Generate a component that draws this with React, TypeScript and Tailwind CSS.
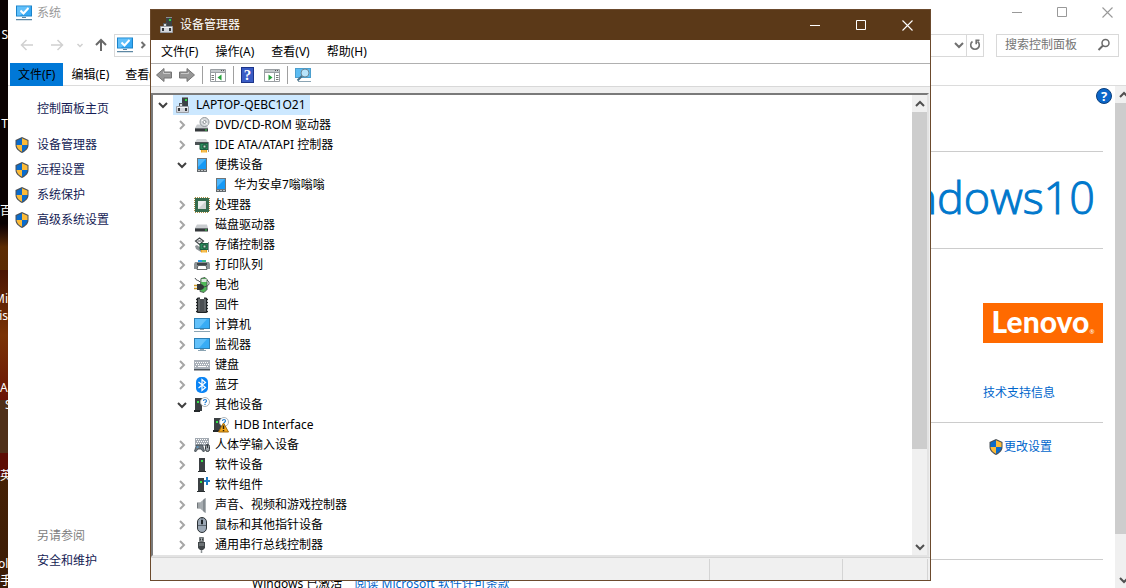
import React from "react";

type SvgProps = { className?: string; children: React.ReactNode; box?: string };

function Pic({ className = "h-4 w-4", children, box = "0 0 16 16" }: SvgProps) {
  return (
    <svg viewBox={box} className={`shrink-0 ${className}`} fill="none" aria-hidden="true">
      {children}
    </svg>
  );
}

function SystemIcon() {
  return (
    <Pic className="h-4 w-4">
      <path d="M0 0.5h16v11H0z" fill="#1b83c9" />
      <path d="M1 1.5h14v9H1z" fill="#36a9f4" />
      <path d="M1 1.5h14L4 10.500H1z" fill="#62c0fa" />
      <path d="M4.500 5.500l3 3 5-5.500" stroke="#fff" strokeWidth="2" />
      <path d="M6 12h4v1H6zM0 14h16v1.300H0z" fill="#5d87a3" />
    </Pic>
  );
}

function ManagerIcon() {
  return (
    <Pic>
      <path d="M7 0h6v10H7z" fill="#3c4245" />
      <path d="M7 0h6v1H7z" fill="#8b9092" />
      <path d="M10 2h2v2h-2z" fill="#31d843" />
      <path d="M4 6h4v3H4z" fill="#555a5e" />
      <path d="M5 7h2v2H5z" fill="#d6d9dc" />
      <path d="M1.500 9.500h12v6h-12z" fill="#d3d6dc" stroke="#9a9fa6" />
      <path d="M3 11h2v3H3zM10 11h2v3h-2z" fill="#33373b" />
      <path d="M2 10.500h11" stroke="#f1f2f4" />
    </Pic>
  );
}

function DriveBase() {
  return (
    <>
      <path d="M3 7.500h10L14 11H1z" fill="#c9cccf" />
      <path d="M1 11h13v3.500H1z" fill="#34383b" />
      <path d="M1 11h13v1H1z" fill="#6b7073" />
      <path d="M11 12.500h2v1h-2z" fill="#3fe052" />
    </>
  );
}

function DvdIcon() {
  return (
    <Pic>
      <DriveBase />
      <circle cx="10.500" cy="5" r="4.500" fill="#d8dbdd" stroke="#90979b" />
      <circle cx="10.500" cy="5" r="1.500" fill="#fff" stroke="#858b8f" />
      <path d="M7.500 3l2 1M11.500 6l2 1.500" stroke="#fff" />
    </Pic>
  );
}

function CardBadge() {
  return (
    <>
      <path d="M6 6.500h8v6H6z" fill="#2c8c5e" stroke="#1d5c40" />
      <path d="M9 8h3v3H9z" fill="#c8d8cf" stroke="#174d34" />
      <path d="M7 13h6v2.500H7z" fill="#f0a61c" />
      <path d="M9 13v3M11 13v3" stroke="#fff3cf" strokeWidth=".6" />
      <path d="M14.500 5v10" stroke="#8a9399" />
    </>
  );
}

function IdeIcon() {
  return (
    <Pic>
      <path d="M3 2h9l2 3H1z" fill="#d0d3d5" />
      <path d="M1 5h13v3H1z" fill="#4c5255" />
      <CardBadge />
    </Pic>
  );
}

function PortableIcon() {
  return (
    <Pic>
      <path d="M3 1h10v14H3z" fill="#6f7578" />
      <path d="M4 2h8v10H4z" fill="#1599f6" />
      <path d="M4 2h8L4 10z" fill="#4db6fb" />
      <path d="M3 13h10v1.500H3z" fill="#5b6164" />
      <path d="M4 13.500h2M7 13.500h2M10 13.500h2" stroke="#d9dcde" strokeWidth=".8" />
    </Pic>
  );
}

function CpuIcon() {
  return (
    <Pic>
      <path d="M1 .5h14M1 15.500h14M.5 1v14M15.500 1v14" stroke="#a98b45" strokeDasharray="1 1" />
      <path d="M1 1h14v14H1z" fill="#356b4d" />
      <path d="M4 4h8v8H4z" fill="#d0d4d2" />
      <path d="M4 4h8L4 12z" fill="#eceeed" />
    </Pic>
  );
}

function DiskIcon() {
  return (
    <Pic>
      <DriveBase />
    </Pic>
  );
}

function StorageIcon() {
  return (
    <Pic>
      <path d="M5.500 1L9.500 4 5.500 7.500 1.500 4z" fill="#fff" stroke="#44494c" strokeWidth="1.200" />
      <path d="M3.500 4h4" stroke="#44494c" />
      <path d="M1 9l2-1 4 3v4l-5-3z" fill="#8d9396" />
      <CardBadge />
    </Pic>
  );
}

function PrinterIcon() {
  return (
    <Pic>
      <path d="M4 3h8v3H4z" fill="#2a99e9" />
      <path d="M8 3h4v3H8z" fill="#35b98a" />
      <path d="M1 5h14l1 2v5H0V7z" fill="#8d9498" />
      <path d="M3 6h10v2H3z" fill="#3f4548" />
      <path d="M4 8.500h8l1 4H3z" fill="#fff" stroke="#3f4548" strokeWidth=".8" />
    </Pic>
  );
}

function BatteryIcon() {
  return (
    <Pic>
      <path d="M7 1.500l4-1 2 2v10l-3 3-4-1z" fill="#4fb857" stroke="#506055" />
      <path d="M7.500 2h5v3h-5z" fill="#dfe7e0" />
      <path d="M1 1c1 3 4 2 5 4" stroke="#44494c" />
      <path d="M13 3c3 2 2.500 5 0 6l-3 1" stroke="#44494c" />
      <path d="M0 8.500h4M0 11.500h4" stroke="#cf9b25" strokeWidth="1.400" />
      <path d="M3 7h3c3 0 4 2 4 3s-1 3-4 3H3z" fill="#33383a" />
    </Pic>
  );
}

function FirmwareIcon() {
  return (
    <Pic>
      <path d="M2 2.500h12M2 5.500h12M2 8.500h12M2 11.500h12M2 14.500h12" stroke="#25292b" strokeWidth="1.500" />
      <path d="M3.500 1h9v14.500h-9z" fill="#4b4f52" stroke="#1f2325" />
      <path d="M6 0h4v2H6z" fill="#fff" />
      <path d="M5 2v12M11 2v12" stroke="#777c7f" />
    </Pic>
  );
}

function ScreenIcon({ stand }: { stand: boolean }) {
  return (
    <Pic>
      <path d="M0 1h16v11H0z" fill="#2d80b5" />
      <path d="M1 2h14v9H1z" fill="#38acf5" />
      <path d="M1 2h12L5 11H1z" fill="#63c1fa" />
      <path d="M6 12h4v1H6z" fill="#8ba4b3" />
      {stand ? <path d="M0 14h16v1H0z" fill="#8ba4b3" /> : <path d="M4 13h8v1H4z" fill="#8ba4b3" />}
    </Pic>
  );
}

function KeyboardIcon() {
  return (
    <Pic>
      <path d="M0 3h16v9H0z" fill="#a9b0b9" />
      <path d="M0 12h16v1.500H0z" fill="#4e555c" />
      <path d="M1 5.500h14M2 7.500h13M1 9.500h2M13 9.500h2" stroke="#fff" strokeDasharray="1 1" />
      <path d="M4 9.500h8" stroke="#fff" />
    </Pic>
  );
}

function BluetoothIcon() {
  return (
    <Pic>
      <rect x="2" y="0" width="12" height="16" rx="5" fill="#0a84f5" />
      <path d="M4.500 5l7 5.500L8 13.500v-11L11.500 5.500 4.500 11" stroke="#fff" strokeWidth="1.200" />
    </Pic>
  );
}

function TowerShape() {
  return (
    <>
      <path d="M1 1h7v13H1z" fill="#3b4043" />
      <path d="M0 13h6v2H0z" fill="#23282a" />
      <path d="M3 4h2v2H3z" fill="#35e34a" />
    </>
  );
}

function UnknownIcon({ warning = false }: { warning?: boolean }) {
  return (
    <Pic>
      <TowerShape />
      <circle cx="11" cy="5" r="4.500" fill="#fff" stroke="#adb3b7" />
      <path d="M9.500 4c0-2 3-2 3 0 0 1-1.500 1-1.500 2.200M11 7v1" stroke="#267fd1" strokeWidth="1.200" />
      {warning && (
        <>
          <path d="M10.500 6l5 9h-10z" fill="#f4a81d" stroke="#a56a08" strokeLinejoin="round" />
          <path d="M10.500 8.500v3.500M10.500 13v1.300" stroke="#2b2108" strokeWidth="1.500" />
        </>
      )}
    </Pic>
  );
}

function HidIcon() {
  return (
    <Pic>
      <path d="M1 1h14v8H1z" fill="#a3aab2" />
      <path d="M2 2.500h12M3 4.500h11M2 6.500h12" stroke="#fff" strokeDasharray="1 1" />
      <path d="M2.500 8h6l2 6-1 1-2.500-3h-3l-2.500 3-1-1z" fill="#6f7880" stroke="#3e464c" strokeWidth=".8" />
      <path d="M2.500 10h2" stroke="#53b7ff" />
      <rect x="11.500" y="7.500" width="4" height="7" rx="2" fill="#9ba2a8" stroke="#33393d" />
      <path d="M13.500 8v3" stroke="#33393d" />
    </Pic>
  );
}

function TowerIcon() {
  return (
    <Pic>
      <path d="M5 1h6v13H5z" fill="#3b4043" />
      <path d="M4 14h8v1H4z" fill="#2a2f31" />
      <path d="M7 3h2v2H7z" fill="#35e34a" />
    </Pic>
  );
}

function ComponentIcon() {
  return (
    <Pic>
      <path d="M4 1h6v13H4z" fill="#3b4043" />
      <path d="M3 14h8v1H3z" fill="#2a2f31" />
      <path d="M6 4h2v2H6z" fill="#35e34a" />
      <path d="M12 0h2v3h2v2h-2v3h-2V5h-2V3h2z" fill="#1c7cc7" />
    </Pic>
  );
}

function SpeakerIcon() {
  return (
    <Pic>
      <path d="M3 5.500h3v6H3z" fill="#70767a" />
      <path d="M6 5.500L11.500 1v15L6 11.500z" fill="#a7adb1" />
      <path d="M9 3l2.500-2v15L9 14z" fill="#868d92" />
      <path d="M5 5.500v6" stroke="#d0d4d6" />
    </Pic>
  );
}

function MouseIcon() {
  return (
    <Pic>
      <rect x="3.500" y=".5" width="9" height="15" rx="4.500" fill="#9ba7b4" stroke="#2c3236" />
      <path d="M4 8.500h8M8 9V1" stroke="#59636c" />
      <path d="M8 3v4" stroke="#1f2427" strokeWidth="2" />
    </Pic>
  );
}

function UsbIcon() {
  return (
    <Pic>
      <path d="M5.500 0.500h4v4h-4z" fill="#a9aeb1" stroke="#585e61" strokeWidth=".8" />
      <path d="M6.500 1.500v2M8.500 1.500v2" stroke="#33383a" />
      <path d="M4 5h7v6l-2 2H6l-2-2z" fill="#414649" />
      <path d="M5 6h5v3H5z" fill="#6c7275" />
      <path d="M7.500 13v3" stroke="#8c9295" strokeWidth="1.500" />
    </Pic>
  );
}

function Shield() {
  return (
    <Pic className="h-4 w-[14px]" box="0 0 14 16">
      <path d="M7 0l6.500 3v5c0 4-3.500 6.500-6.500 8C4 14.500.5 12 .5 8V3z" fill="#4b5157" />
      <path d="M7 1.300L1.500 3.800V8H7z" fill="#0b6bcb" />
      <path d="M7 1.300l5.500 2.500V8H7z" fill="#fcbb38" />
      <path d="M1.500 8H7v6.800C4 13.300 1.500 11 1.500 8z" fill="#fcbb38" />
      <path d="M12.500 8H7v6.800c3-1.500 5.500-3.800 5.500-6.800z" fill="#0b6bcb" />
    </Pic>
  );
}

function Chevron({ dir, color }: { dir: "right" | "down" | "up"; color: string }) {
  const d = dir === "right" ? "M4 2l4 4-4 4" : dir === "down" ? "M2 4l4 4 4-4" : "M2 8l4-4 4 4";
  return (
    <Pic className="h-3 w-3" box="0 0 12 12">
      <path d={d} stroke={color} strokeWidth="2" />
    </Pic>
  );
}

type CaptionProps = { button: string };

function CaptionButtons({ button }: CaptionProps) {
  return (
    <div className="flex h-full">
      <button aria-label="最小化" className={button}>
        <Pic className="h-[11px] w-[11px]" box="0 0 11 11">
          <path d="M0 5.500h10" stroke="currentColor" />
        </Pic>
      </button>
      <button aria-label="最大化" className={button}>
        <Pic className="h-[11px] w-[11px]" box="0 0 11 11">
          <path d="M.5.5h9v9h-9z" stroke="currentColor" />
        </Pic>
      </button>
      <button aria-label="关闭" className={button}>
        <Pic className="h-[11px] w-[11px]" box="0 0 11 11">
          <path d="M.5.5l10 10M10.500.5l-10 10" stroke="currentColor" strokeWidth="1.100" />
        </Pic>
      </button>
    </div>
  );
}

type Node = { text: string; icon: React.ReactNode; level: 0 | 1 | 2; open?: boolean };

const nodes: Node[] = [
  { text: "LAPTOP-QEBC1O21", icon: <ManagerIcon />, level: 0, open: true },
  { text: "DVD/CD-ROM 驱动器", icon: <DvdIcon />, level: 1 },
  { text: "IDE ATA/ATAPI 控制器", icon: <IdeIcon />, level: 1 },
  { text: "便携设备", icon: <PortableIcon />, level: 1, open: true },
  { text: "华为安卓7嗡嗡嗡", icon: <PortableIcon />, level: 2 },
  { text: "处理器", icon: <CpuIcon />, level: 1 },
  { text: "磁盘驱动器", icon: <DiskIcon />, level: 1 },
  { text: "存储控制器", icon: <StorageIcon />, level: 1 },
  { text: "打印队列", icon: <PrinterIcon />, level: 1 },
  { text: "电池", icon: <BatteryIcon />, level: 1 },
  { text: "固件", icon: <FirmwareIcon />, level: 1 },
  { text: "计算机", icon: <ScreenIcon stand />, level: 1 },
  { text: "监视器", icon: <ScreenIcon stand={false} />, level: 1 },
  { text: "键盘", icon: <KeyboardIcon />, level: 1 },
  { text: "蓝牙", icon: <BluetoothIcon />, level: 1 },
  { text: "其他设备", icon: <UnknownIcon />, level: 1, open: true },
  { text: "HDB Interface", icon: <UnknownIcon warning />, level: 2 },
  { text: "人体学输入设备", icon: <HidIcon />, level: 1 },
  { text: "软件设备", icon: <TowerIcon />, level: 1 },
  { text: "软件组件", icon: <ComponentIcon />, level: 1 },
  { text: "声音、视频和游戏控制器", icon: <SpeakerIcon />, level: 1 },
  { text: "鼠标和其他指针设备", icon: <MouseIcon />, level: 1 },
  { text: "通用串行总线控制器", icon: <UsbIcon />, level: 1 },
];

const indents = ["pl-0", "pl-[19px]", "pl-[38px]"];

function TreeRow({ node }: { node: Node }) {
  const selected = node.level === 0;
  return (
    <li
      role="treeitem"
      aria-level={node.level + 1}
      aria-expanded={node.level === 2 ? undefined : !!node.open}
      aria-selected={selected}
      className={`flex h-5 items-center ${indents[node.level]}`}
    >
      <span className="flex w-5 shrink-0 justify-center">
        {node.level < 2 && (
          <Chevron dir={node.open ? "down" : "right"} color={node.open ? "#404040" : "#a6a6a6"} />
        )}
      </span>
      <span
        className={`flex h-5 items-center gap-[5px] whitespace-nowrap pl-[2px] pr-1 ${selected ? "bg-[#cce8ff]" : ""}`}
      >
        {node.icon}
        <span>{node.text}</span>
      </span>
    </li>
  );
}

function PaneIcon({ flip = false }: { flip?: boolean }) {
  return (
    <Pic>
      <path d="M.5 2.500h15v12H.5z" fill="#fff" stroke="#9a9fa3" />
      <path d="M1 3h14v2H1z" fill="#c3c7ca" />
      <path d="M11 3.500h4" stroke="#555" strokeDasharray="1 1" />
      <path d="M.5 5.500h15" stroke="#9a9fa3" />
      {flip ? (
        <>
          <path d="M10.500 6v8.500" stroke="#9a9fa3" />
          <path d="M12 8.500h2.500M12 10.500h2.500M12 12.500h2.500" stroke="#777" />
          <path d="M4.500 7.500l4 3-4 3z" fill="#25a33b" />
        </>
      ) : (
        <>
          <path d="M5.500 6v8.500" stroke="#9a9fa3" />
          <path d="M1.500 8.500H4M1.500 10.500H4M1.500 12.500H4" stroke="#777" />
          <path d="M11.500 7.500l-4 3 4 3z" fill="#25a33b" />
        </>
      )}
    </Pic>
  );
}

function BigArrow({ right = false }: { right?: boolean }) {
  return (
    <Pic>
      <path
        d={right ? "M.5 5h7.500V1.500L15.500 8 8 14.500V11H.5z" : "M15.500 5H8V1.500L.5 8 8 14.500V11h7.500z"}
        fill="#979797"
        stroke="#747474"
      />
      <path d={right ? "M2 6.500h7.500V5" : "M14 6.500H7.500V4.500"} stroke="#c9c9c9" />
    </Pic>
  );
}

function Separator() {
  return <span className="h-[18px] w-px bg-[#a0a0a0]" />;
}

function ScrollBar({ thumb, className = "" }: { thumb: string; className?: string }) {
  return (
    <div className={`flex flex-col bg-[#f0f0f0] ${className}`} aria-hidden="true">
      <span className="flex h-[17px] shrink-0 items-center justify-center">
        <Chevron dir="up" color="#505050" />
      </span>
      <span className="flex min-h-0 flex-1 flex-col">
        <span className={`bg-[#cdcdcd] ${thumb}`} />
      </span>
      <span className="flex h-[17px] shrink-0 items-center justify-center">
        <Chevron dir="down" color="#505050" />
      </span>
    </div>
  );
}

function DeviceManager() {
  return (
    <section
      aria-label="设备管理器"
      className="absolute bottom-[7px] left-[150px] right-[195px] top-[9px] flex flex-col border border-[#6b4a2d] bg-white"
    >
      <header className="flex h-[30px] shrink-0 items-center bg-[#5b3918] pl-2 text-white">
        <ManagerIcon />
        <h1 className="flex-1 pl-[5px]">设备管理器</h1>
        <CaptionButtons button="flex h-full w-[46px] items-center justify-center" />
      </header>
      <nav className="flex h-[23px] shrink-0 items-center gap-[17px] pl-[10px]">
        {["文件(F)", "操作(A)", "查看(V)", "帮助(H)"].map((label) => (
          <button key={label}>{label}</button>
        ))}
      </nav>
      <div className="flex h-6 shrink-0 items-center gap-[7px] border-y border-t-[#b0b0b0] border-b-[#d8d8d8] pl-[5px]">
        <button aria-label="后退">
          <BigArrow />
        </button>
        <button aria-label="前进">
          <BigArrow right />
        </button>
        <Separator />
        <button aria-label="显示控制台树">
          <PaneIcon />
        </button>
        <Separator />
        <button
          aria-label="帮助"
          className="flex h-4 w-[13px] items-center justify-center border border-[#1c3489] bg-[#3a5cc5] font-['Liberation_Serif',serif] text-[15px] font-bold leading-none text-white"
        >
          ?
        </button>
        <button aria-label="显示操作窗格" className="pl-[3px]">
          <PaneIcon flip />
        </button>
        <Separator />
        <button aria-label="扫描检测硬件改动">
          <Pic>
            <path d="M0 1h16v10H0z" fill="#4c9fce" />
            <path d="M1 2h14v8H1z" fill="#5cbcf2" />
            <path d="M3 14.500h13" stroke="#8ba4b3" />
            <circle cx="10" cy="6" r="4" fill="#b8e4fb" stroke="#6c8797" />
            <path d="M7 9l-4.500 4.500" stroke="#48718a" strokeWidth="2" />
          </Pic>
        </button>
      </div>
      <div className="flex min-h-0 flex-1 flex-col bg-[#f0f0f0] pr-px pt-[6px]">
        <div className="flex min-h-0 flex-1 border-2 border-b-[#e3e3e3] border-l-[#7a7a7a] border-r-[#e3e3e3] border-t-[#7a7a7a] bg-white">
          <ul role="tree" className="min-w-0 flex-1 overflow-hidden">
            {nodes.map((node) => (
              <TreeRow key={node.text} node={node} />
            ))}
          </ul>
          <ScrollBar className="w-[15px]" thumb="h-[79%]" />
        </div>
      </div>
      <footer className="flex h-[23px] shrink-0 justify-end border-t border-[#d4d4d4] bg-[#f0f0f0] pr-[2px] pt-px">
        <span className="w-[133px] border-l border-[#d4d4d4]" />
        <span className="w-[86px] border-x border-[#d4d4d4]" />
      </footer>
    </section>
  );
}

function Desktop() {
  const scraps = [
    { text: "S", place: "top-[27px] right-0" },
    { text: "T", place: "top-[116px] right-0" },
    { text: "百", place: "top-[203px] left-0" },
    { text: "Mi", place: "top-[291px] right-0" },
    { text: "is", place: "top-[308px] right-0" },
    { text: "A", place: "top-[380px] left-0" },
    { text: "S", place: "top-[397px] left-[5px]" },
    { text: "英", place: "top-[468px] left-0" },
    { text: "oly", place: "top-[556px] left-[-2px]" },
    { text: "助手", place: "top-[573px] right-[-4px]" },
  ];
  return (
    <aside className="relative w-2 shrink-0 overflow-hidden bg-linear-to-b from-[#0a0202] from-38% via-[#5c2c03] via-42% to-[#3b1c06] text-white">
      <div className="absolute inset-x-0 top-[46%] h-[22%] bg-linear-to-b from-[#4a1503] via-[#7a3305] to-[#6b1206]" />
      <div className="absolute inset-x-0 top-[68%] h-[9%] bg-[#4f3019]" />
      <div className="absolute inset-x-0 top-[77%] h-[4%] bg-[#5d0d04]" />
      {scraps.map((s) => (
        <span key={s.place} className={`absolute whitespace-nowrap leading-4 ${s.place}`}>
          {s.text}
        </span>
      ))}
    </aside>
  );
}

function SystemWindow() {
  return (
    <main className="flex min-w-0 flex-1 flex-col bg-white">
      <header className="-mr-1 flex h-6 shrink-0 items-center pl-2 text-[#999]">
        <div className="flex flex-1 items-center gap-[5px] pt-[2px]">
          <SystemIcon />
          系统
        </div>
        <CaptionButtons button="flex h-full w-[45px] items-center justify-center" />
      </header>
      <div className="flex h-[39px] shrink-0 items-center pb-px pr-[7px] pt-1">
        <div className="flex items-center pl-3 text-[#d0d0d0]">
          <button aria-label="后退" className="pr-4">
            <Pic className="h-[14px] w-[14px]" box="0 0 14 14">
              <path d="M13 7H1.500M6.500 2l-5 5 5 5" stroke="currentColor" strokeWidth="1.500" />
            </Pic>
          </button>
          <button aria-label="前进" className="pr-[10px]">
            <Pic className="h-[14px] w-[14px]" box="0 0 14 14">
              <path d="M1 7h11.500M7.500 2l5 5-5 5" stroke="currentColor" strokeWidth="1.500" />
            </Pic>
          </button>
          <button aria-label="最近位置" className="pr-2">
            <Pic className="h-3 w-3" box="0 0 12 12">
              <path d="M3.500 5l2.500 2.500L8.500 5" stroke="currentColor" strokeWidth="1.500" />
            </Pic>
          </button>
          <button aria-label="上移" className="pr-[6px] text-[#686868]">
            <Pic className="h-[14px] w-[14px]" box="0 0 14 14">
              <path d="M7 13V2M2 7l5-5 5 5" stroke="currentColor" strokeWidth="2" />
            </Pic>
          </button>
        </div>
        <div className="flex h-[23px] min-w-0 flex-1 items-center border border-[#d9d9d9] pl-[2px]">
          <SystemIcon />
          <span className="pl-[4px]">
            <Pic className="h-3 w-3" box="0 0 12 12">
              <path d="M4.500 3l3 3-3 3" stroke="#707070" strokeWidth="2" />
            </Pic>
          </span>
          <input aria-label="地址" className="h-full min-w-0 flex-1 px-1 outline-none" />
          <button aria-label="以前的位置" className="px-[1px]">
            <Chevron dir="down" color="#707070" />
          </button>
          <button aria-label="刷新" className="flex h-full w-[17px] items-center justify-center border-l border-[#d9d9d9]">
            <Pic className="h-3 w-3" box="0 0 12 12">
              <path d="M8.500 2.500a4.300 4.300 0 1 1-5 0" stroke="#707070" strokeWidth="1.600" />
              <path d="M10.500 1.200H7.200v4" stroke="#707070" strokeWidth="1.600" />
            </Pic>
          </button>
        </div>
        <label className="ml-3 flex h-[23px] w-[123px] items-center border border-[#d9d9d9] pl-2 pr-[7px]">
          <input
            aria-label="搜索控制面板"
            placeholder="搜索控制面板"
            className="min-w-0 flex-1 outline-none placeholder:text-[#757575]"
          />
          <Pic className="h-[14px] w-[14px]" box="0 0 14 14">
            <circle cx="8.500" cy="5" r="3.500" stroke="#6a6a6a" strokeWidth="1.500" />
            <path d="M6 7.500L1.500 12" stroke="#6a6a6a" strokeWidth="2" />
          </Pic>
        </label>
      </div>
      <nav className="flex h-[23px] shrink-0 border-b border-[#dcdcdc] pl-[2px]">
        <button className="h-[23px] bg-[#0078d7] px-2">文件(F)</button>
        <button className="h-[23px] px-2">编辑(E)</button>
        <button className="h-[23px] px-2">查看(V)</button>
      </nav>
      <div className="flex min-h-0 flex-1">
        <aside className="flex w-[190px] shrink-0 flex-col pb-[15px] pl-[6px] pt-[11px] text-[#151c55]">
          <a href="#home" className="pl-[23px] leading-6">
            控制面板主页
          </a>
          <ul className="pt-[11px]">
            {["设备管理器", "远程设置", "系统保护", "高级系统设置"].map((label) => (
              <li key={label}>
                <a href="#settings" className="flex h-[25px] items-center gap-2 pl-px">
                  <Shield />
                  {label}
                </a>
              </li>
            ))}
          </ul>
          <div className="mt-auto pl-[23px] leading-[25px]">
            <p className="text-[#808080]">另请参阅</p>
            <a href="#security">安全和维护</a>
          </div>
        </aside>
        <div className="flex min-w-0 flex-1 flex-col pl-9 pr-3">
          <div className="flex h-[66px] shrink-0 items-start justify-end border-b border-[#cccccc]">
            <button
              aria-label="帮助"
              className="-mr-[9px] mt-[2px] flex h-4 w-4 items-center justify-center rounded-full border border-[#0b3f7c] bg-[#0b66c9] text-[13px] font-bold leading-none text-white"
            >
              ?
            </button>
          </div>
          <div className="flex h-[97px] shrink-0 items-center justify-end border-b border-[#cccccc] pb-2 pr-2">
            <p className="whitespace-nowrap font-['Open_Sans',sans-serif] text-[45px] font-light leading-none text-[#0078cc] [-webkit-text-stroke:1px_#0078cc]">
              Windows10
            </p>
          </div>
          <div className="flex h-[174px] shrink-0 flex-col items-end border-b border-[#cccccc] pt-[54px]">
            <div className="w-[120px]">
              <div className="flex h-10 items-center justify-center bg-[#ff6a00] pb-1 text-white">
                <span className="font-['Lato',sans-serif] text-[30px] font-black leading-none">Lenovo</span>
                <span className="self-end pb-1 text-[6px] leading-none">®</span>
              </div>
              <a href="#support" className="mt-10 block leading-5 text-[#0066cc]">
                技术支持信息
              </a>
            </div>
          </div>
          <div className="flex h-[137px] shrink-0 items-start justify-end border-b border-[#cccccc] pr-[51px] pt-[14px]">
            <a href="#change" className="flex h-5 items-center gap-px text-[#0066cc]">
              <Shield />
              更改设置
            </a>
          </div>
          <p className="flex gap-3 whitespace-nowrap pl-[18px] pt-[14px] leading-5">
            <span>Windows 已激活</span>
            <a href="#license" className="text-[#0066cc]">
              阅读 Microsoft 软件许可条款
            </a>
          </p>
        </div>
        <div className="flex w-[11px] shrink-0 overflow-hidden">
          <ScrollBar className="w-[17px] shrink-0" thumb="h-[92%]" />
        </div>
      </div>
    </main>
  );
}

export default function App() {
  return (
    <div className="relative flex h-screen overflow-hidden font-['Noto_Sans','Noto_Sans_CJK_SC',sans-serif] text-xs text-black">
      <Desktop />
      <SystemWindow />
      <DeviceManager />
    </div>
  );
}
